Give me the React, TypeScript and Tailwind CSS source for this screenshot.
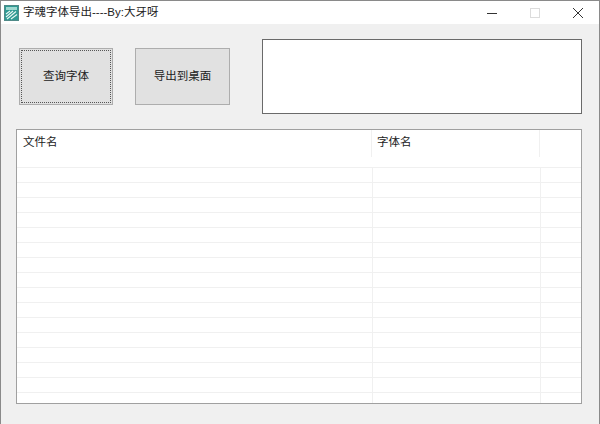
import React from "react";

const rows = Array.from({ length: 16 });

const App = () => {
  return (
    <div className="w-[600px] h-[424px] flex flex-col overflow-hidden bg-[#f0f0f0] border-l border-r border-t border-[#8a8a8a] font-['Liberation_Sans','Noto_Sans_CJK_SC',sans-serif] text-[11.5px] text-[#222]">
      {/* Title bar */}
      <div className="h-[23px] shrink-0 bg-white flex items-center pl-[3px]">
        <svg width="15" height="16" viewBox="0 0 15 16" className="shrink-0">
          <rect x="0.5" y="0.5" width="14" height="15" fill="#2f9a93" stroke="#4f8a88" />
          <rect x="2" y="2" width="11" height="3" fill="#9ed8d0" />
          <path d="M2 9 L6 6 M2 12 L9 6 M3 14 L12 6.5 M7 14 L13 9.5" stroke="#e8f6f3" strokeWidth="1.1" fill="none" />
        </svg>
        <span className="ml-[4px] text-[11.5px] leading-none">字魂字体导出----By:大牙呀</span>
        <div className="ml-auto flex items-center h-full">
          <svg width="12" height="12" viewBox="0 0 12 12" className="mr-[31px]">
            <path d="M1 6.5 H11" stroke="#333" strokeWidth="1" />
          </svg>
          <svg width="12" height="12" viewBox="0 0 12 12" className="mr-[31px]">
            <rect x="1.5" y="1.5" width="9" height="9" fill="none" stroke="#dcdcdc" />
          </svg>
          <svg width="12" height="12" viewBox="0 0 12 12" className="mr-[15px]">
            <path d="M1 1 L11 11 M11 1 L1 11" stroke="#333" strokeWidth="1" />
          </svg>
        </div>
      </div>

      <div className="flex-1 flex flex-col pl-[15px] pr-[17px] pt-[15px]">
        {/* Controls */}
        <div className="flex items-center h-[75px] shrink-0">
          <button className="ml-[3px] w-[94px] h-[57px] bg-[#e1e1e1] border border-[#adadad] p-[1px] shrink-0">
            <span className="w-full h-full flex items-center justify-center border border-dotted border-[#555]">查询字体</span>
          </button>
          <button className="ml-[22px] w-[95px] h-[57px] bg-[#e1e1e1] border border-[#adadad] shrink-0">导出到桌面</button>
          <div className="ml-[32px] flex-1 h-[75px] bg-white border border-[#6a6a6a]" />
        </div>

        {/* File table */}
        <div className="mt-[15px] h-[275px] bg-white border border-[#a0a0a0] overflow-hidden">
          <div className="h-[37px] flex">
            <div className="w-[355px] pl-[6px] pt-[4px] border-r border-[#f0f0f0] h-[27px]">文件名</div>
            <div className="w-[168px] pl-[5px] pt-[4px] border-r border-[#f0f0f0] h-[27px]">字体名</div>
          </div>
          {rows.map((_, i) => (
            <div key={i} className="h-[15px] flex border-t border-[#f0f0f0]">
              <div className="w-[356px] border-r border-[#f0f0f0]" />
              <div className="w-[168px] border-r border-[#f0f0f0]" />
            </div>
          ))}
        </div>
      </div>
    </div>
  );
};

export default App;
